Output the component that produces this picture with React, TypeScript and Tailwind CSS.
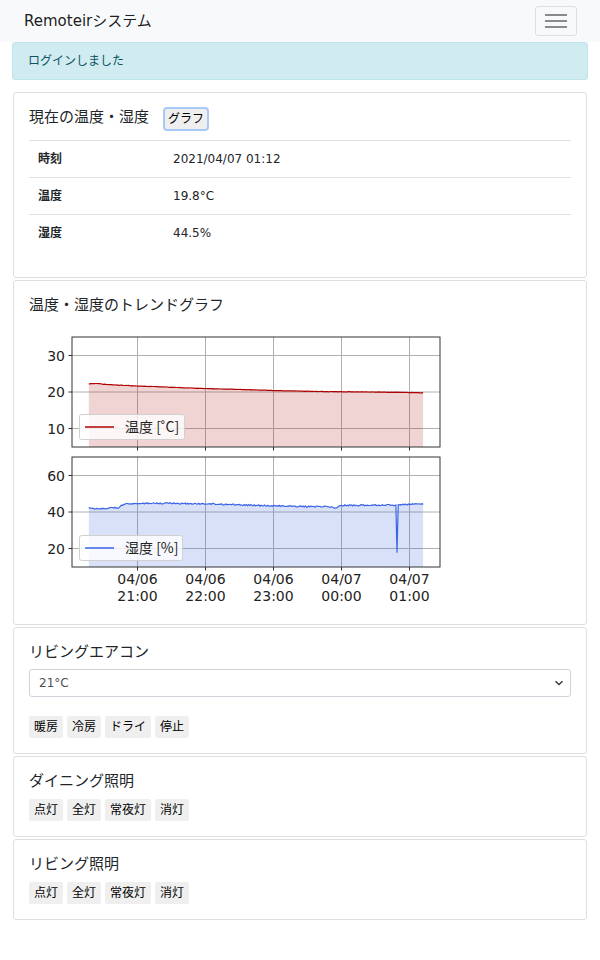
import React from "react";

const FONT = "font-['DejaVu_Sans','Noto_Sans_CJK_JP',sans-serif]";

function makeRand(seed: number) {
  let s = seed;
  return () => {
    s = (s * 16807) % 2147483647;
    return (s - 1) / 2147483646;
  };
}

function interp(keys: [number, number][], t: number) {
  for (let i = 0; i < keys.length - 1; i++) {
    const [t0, v0] = keys[i];
    const [t1, v1] = keys[i + 1];
    if (t >= t0 && t <= t1) return v0 + ((v1 - v0) * (t - t0)) / (t1 - t0);
  }
  return keys[keys.length - 1][1];
}

const xOf = (t: number) => 136.5 + (t * 68) / 60;
const tempY = (v: number) => 391 - (v - 20) * 3.65;
const humY = (v: number) => 511 - (v - 40) * 1.825;

const tempKeys: [number, number][] = [
  [-43, 22.25], [-35, 22.3], [-25, 22.0], [0, 21.65], [30, 21.3], [60, 20.95],
  [90, 20.7], [120, 20.4], [150, 20.2], [180, 20.05], [210, 20.0], [252, 19.8],
];
const humKeys: [number, number][] = [
  [-43, 42.2], [-38, 41.6], [-30, 41.8], [-22, 42.3], [-17, 42.2], [-12, 44.3],
  [-5, 44.6], [20, 44.8], [60, 44.5], [90, 43.9], [120, 43.4], [150, 43.0],
  [165, 42.9], [175, 42.3], [180, 43.6], [200, 43.7], [225, 43.8], [252, 44.5],
];

function buildSeries() {
  const r = makeRand(4242);
  const temp: [number, number][] = [];
  const hum: [number, number][] = [];
  for (let t = -43; t <= 252; t += 1) {
    const tv = interp(tempKeys, t) + (r() - 0.5) * 0.08;
    let hv = interp(humKeys, t) + (r() - 0.5) * 0.7;
    if (t === 229) hv = 17.7;
    temp.push([xOf(t), tempY(tv)]);
    hum.push([xOf(t), humY(hv)]);
  }
  return { temp, hum };
}

function Chart() {
  const { temp, hum } = buildSeries();
  const pts = (a: [number, number][]) => a.map(([x, y]) => `${x.toFixed(1)},${y.toFixed(1)}`).join(" ");
  const fillPts = (a: [number, number][], bottom: number) =>
    `${a[0][0].toFixed(1)},${bottom} ${pts(a)} ${a[a.length - 1][0].toFixed(1)},${bottom}`;
  const gridX = [136.5, 204.5, 272.5, 340.5, 408.5];
  const labels = [
    ["04/06", "21:00"],
    ["04/06", "22:00"],
    ["04/06", "23:00"],
    ["04/07", "00:00"],
    ["04/07", "01:00"],
  ];
  const topTicks = [30, 20, 10];
  const botTicks = [60, 40, 20];
  return (
    <svg width={430} height={287} viewBox="28 321 430 287" className="block">
      {/* Top axes */}
      <rect x={71} y={336} width={368} height={110} fill="#ffffff" />
      {gridX.map((x) => (
        <line key={"tg" + x} x1={x} x2={x} y1={336} y2={446} stroke="#b0b0b0" strokeWidth={1} />
      ))}
      {topTicks.map((v) => (
        <line key={"th" + v} x1={71} x2={439} y1={tempY(v)} y2={tempY(v)} stroke="#b0b0b0" strokeWidth={1} />
      ))}
      <polygon points={fillPts(temp, 446)} fill="#b22222" fillOpacity={0.2} />
      <polyline points={pts(temp)} fill="none" stroke="#b00000" strokeWidth={1.2} />
      <rect x={71} y={336} width={368} height={110} fill="none" stroke="#333" strokeWidth={1} />
      {topTicks.map((v) => (
        <g key={"tt" + v}>
          <line x1={67.5} x2={71} y1={tempY(v)} y2={tempY(v)} stroke="#333" strokeWidth={1} />
          <text x={64} y={tempY(v) + 5} textAnchor="end" fontSize={14} fontFamily="DejaVu Sans, sans-serif" fill="#222">
            {v}
          </text>
        </g>
      ))}
      {gridX.map((x) => (
        <line key={"tx" + x} x1={x} x2={x} y1={446} y2={449.5} stroke="#333" strokeWidth={1} />
      ))}
      <rect x={78.5} y={413.5} width={105} height={25} rx={2} fill="#ffffff" fillOpacity={0.8} stroke="#d0d0d0" />
      <line x1={84} x2={113} y1={426} y2={426} stroke="#b00000" strokeWidth={1.5} />
      <text x={124} y={431} fontSize={14} fontFamily="Noto Sans CJK JP, sans-serif" fill="#222">
        温度 [˚C]
      </text>

      {/* Bottom axes */}
      <rect x={71} y={456} width={368} height={110} fill="#ffffff" />
      {gridX.map((x) => (
        <line key={"bg" + x} x1={x} x2={x} y1={456} y2={566} stroke="#b0b0b0" strokeWidth={1} />
      ))}
      {botTicks.map((v) => (
        <line key={"bh" + v} x1={71} x2={439} y1={humY(v)} y2={humY(v)} stroke="#b0b0b0" strokeWidth={1} />
      ))}
      <polygon points={fillPts(hum, 566)} fill="#4169e1" fillOpacity={0.2} />
      <polyline points={pts(hum)} fill="none" stroke="#3a63e6" strokeWidth={1.2} />
      <rect x={71} y={456} width={368} height={110} fill="none" stroke="#333" strokeWidth={1} />
      {botTicks.map((v) => (
        <g key={"bt" + v}>
          <line x1={67.5} x2={71} y1={humY(v)} y2={humY(v)} stroke="#333" strokeWidth={1} />
          <text x={64} y={humY(v) + 5} textAnchor="end" fontSize={14} fontFamily="DejaVu Sans, sans-serif" fill="#222">
            {v}
          </text>
        </g>
      ))}
      {gridX.map((x, i) => (
        <g key={"bx" + x}>
          <line x1={x} x2={x} y1={566} y2={569.5} stroke="#333" strokeWidth={1} />
          <text x={x} y={583} textAnchor="middle" fontSize={14} fontFamily="DejaVu Sans, sans-serif" fill="#222">
            {labels[i][0]}
          </text>
          <text x={x} y={600} textAnchor="middle" fontSize={14} fontFamily="DejaVu Sans, sans-serif" fill="#222">
            {labels[i][1]}
          </text>
        </g>
      ))}
      <rect x={78.5} y={534.5} width={103} height={25} rx={2} fill="#ffffff" fillOpacity={0.8} stroke="#d0d0d0" />
      <line x1={84} x2={113} y1={547} y2={547} stroke="#3a63e6" strokeWidth={1.5} />
      <text x={124} y={552} fontSize={14} fontFamily="Noto Sans CJK JP, sans-serif" fill="#222">
        湿度 [%]
      </text>
    </svg>
  );
}

function SmallButtons({ items }: { items: string[] }) {
  return (
    <div className="flex gap-[4px]">
      {items.map((it) => (
        <button
          key={it}
          className="h-[22px] px-[5px] bg-[#efefef] rounded-[2px] text-[12px] leading-[22px] text-black"
        >
          {it}
        </button>
      ))}
    </div>
  );
}

function Card({ children }: { children: React.ReactNode }) {
  return <div className="border border-[#dfdfdf] rounded-[3px] bg-white p-[15px]">{children}</div>;
}

function Title({ children, mb }: { children: React.ReactNode; mb?: boolean }) {
  return (
    <h5 className={mb ? "text-[15px] leading-[18px] text-[#212529] mb-[9px]" : "text-[15px] leading-[18px] text-[#212529] mb-[8px]"}>
      {children}
    </h5>
  );
}

export default function App() {
  const rows: [string, string][] = [
    ["時刻", "2021/04/07 01:12"],
    ["温度", "19.8°C"],
    ["湿度", "44.5%"],
  ];
  return (
    <div className={`w-[600px] min-h-[960px] bg-white text-[#212529] ${FONT}`}>
      <nav className="h-[42px] bg-[#f8f9fa] flex items-center justify-between pl-[24px] pr-[23px]">
        <span className="text-[15px] text-black/90">Remoteirシステム</span>
        <button className="w-[42px] h-[30px] border border-black/10 rounded-[3px] flex flex-col items-center justify-center gap-[4px]">
          <span className="block w-[22px] h-[2px] bg-[#8a8a8a]" />
          <span className="block w-[22px] h-[2px] bg-[#8a8a8a]" />
          <span className="block w-[22px] h-[2px] bg-[#8a8a8a]" />
        </button>
      </nav>
      <div className="px-[12px]">
        <div className="border border-[#bee5eb] bg-[#d1ecf1] text-[#0c5460] text-[12px] leading-[18px] px-[15px] py-[9px] rounded-[3px] mb-[12px]">
          ログインしました
        </div>
        <div className="mx-[1px] flex flex-col gap-[2px]">
          <Card>
            <div className="flex items-start mb-[9px]">
              <h5 className="text-[15px] leading-[18px]">現在の温度・湿度</h5>
              <button className="ml-[14px] -mt-[1px] h-[24px] px-[3px] bg-[#efefef] border-2 border-[#a9c9f7] rounded-[4px] text-[12px] leading-[18px] text-black">
                グラフ
              </button>
            </div>
            <table className="w-full text-[12px] mb-[11px]">
              <tbody>
                {rows.map(([k, v]) => (
                  <tr key={k} className="border-t border-[#dee2e6]">
                    <td className="w-[135px] px-[9px] py-[9px] leading-[18px] font-bold">{k}</td>
                    <td className="px-[9px] py-[9px] leading-[18px]">{v}</td>
                  </tr>
                ))}
              </tbody>
            </table>
          </Card>
          <Card>
            <Title>温度・湿度のトレンドグラフ</Title>
            <Chart />
          </Card>
          <Card>
            <Title>リビングエアコン</Title>
            <div className="h-[28px] border border-[#ced4da] rounded-[3px] flex items-center justify-between pl-[9px] pr-[6px] text-[12px] text-[#495057]">
              <span>21°C</span>
              <svg width="10" height="6" viewBox="0 0 10 6">
                <path d="M1.5 1.2 L5 4.6 L8.5 1.2" fill="none" stroke="#343a40" strokeWidth="1.4" />
              </svg>
            </div>
            <div className="mt-[19px]">
              <SmallButtons items={["暖房", "冷房", "ドライ", "停止"]} />
            </div>
          </Card>
          <Card>
            <Title mb>ダイニング照明</Title>
            <SmallButtons items={["点灯", "全灯", "常夜灯", "消灯"]} />
          </Card>
          <Card>
            <Title mb>リビング照明</Title>
            <SmallButtons items={["点灯", "全灯", "常夜灯", "消灯"]} />
          </Card>
        </div>
      </div>
    </div>
  );
}
